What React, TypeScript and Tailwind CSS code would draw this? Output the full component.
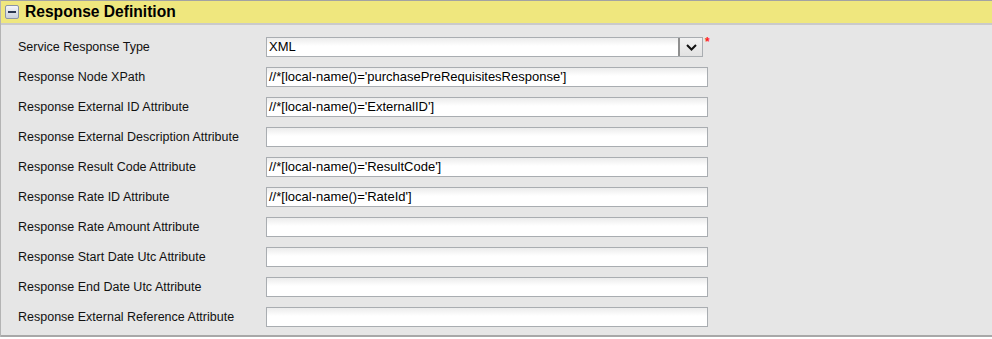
import React from 'react';

const rows: { label: string; value: string }[] = [
  { label: 'Response Node XPath', value: "//*[local-name()='purchasePreRequisitesResponse']" },
  { label: 'Response External ID Attribute', value: "//*[local-name()='ExternalID']" },
  { label: 'Response External Description Attribute', value: '' },
  { label: 'Response Result Code Attribute', value: "//*[local-name()='ResultCode']" },
  { label: 'Response Rate ID Attribute', value: "//*[local-name()='RateId']" },
  { label: 'Response Rate Amount Attribute', value: '' },
  { label: 'Response Start Date Utc Attribute', value: '' },
  { label: 'Response End Date Utc Attribute', value: '' },
  { label: 'Response External Reference Attribute', value: '' },
];

const Field: React.FC<{ value: string }> = ({ value }) => (
  <div className="w-[442px] h-[20px] border border-[#a9adb1] bg-gradient-to-b from-[#ececec] to-white to-[45%] pl-[2px] text-[13px] leading-[18px] text-black">
    {value}
  </div>
);

const App: React.FC = () => {
  return (
    <div className="w-[992px] h-[339px] bg-white font-['Liberation_Sans',Arial,sans-serif]">
      <div className="border-t border-[#a3a3a3] border-l border-l-[#b4b4b4]">
        <div className="h-[24px] bg-[#efe77e] flex items-center pl-[4px] gap-[6px] border-b-2 border-[#cacaca]">
          <div className="w-[14px] h-[14px] border border-[#8a94a6] rounded-[2px] bg-gradient-to-b from-[#f4f6fa] to-[#c9d0dc] flex items-center justify-center">
            <div className="w-[8px] h-[2px] bg-[#2a3650]" />
          </div>
          <span className="text-[15.6px] font-bold text-black">Response Definition</span>
        </div>
        <div className="bg-[#e6e6e6] pt-[7px] pb-[3px] border-b-2 border-[#a8a8a8]">
          <div className="flex items-center h-[30px]">
            <div className="w-[265px] pl-[17px] text-[12.5px] text-[#111]">Service Response Type</div>
            <div className="flex items-start">
              <div className="w-[437px] h-[20px] border border-[#a9adb1] bg-gradient-to-b from-[#ececec] to-white to-[45%] flex">
                <div className="flex-1 pl-[2px] text-[13px] leading-[18px] text-black">XML</div>
                <div className="w-[24px] h-[18px] border-l-2 border-[#8f8f8f] bg-gradient-to-b from-[#f2f2f2] to-[#e2e2e2] flex items-center justify-center">
                  <svg width="11" height="7" viewBox="0 0 11 7">
                    <path d="M1 1 L5.5 5.5 L10 1" fill="none" stroke="#111" strokeWidth="2" />
                  </svg>
                </div>
              </div>
              <span className="text-[#ff2020] text-[12px] leading-[10px] ml-[2px] font-bold">*</span>
            </div>
          </div>
          {rows.map((r) => (
            <div key={r.label} className="flex items-center h-[30px]">
              <div className="w-[265px] pl-[17px] text-[12.5px] text-[#111]">{r.label}</div>
              <Field value={r.value} />
            </div>
          ))}
        </div>
      </div>
    </div>
  );
};

export default App;
